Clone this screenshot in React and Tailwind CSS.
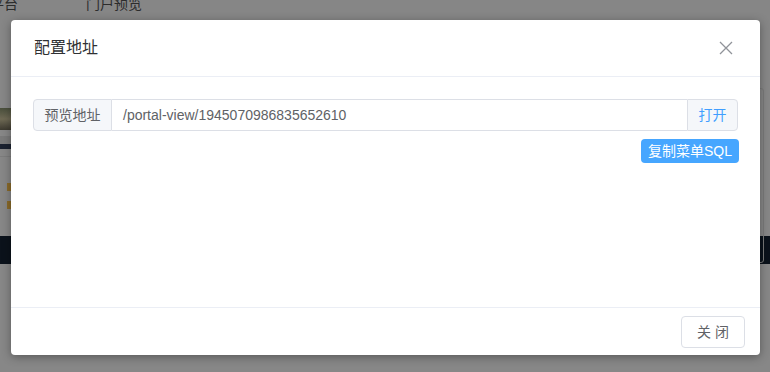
import React from "react";

export default function App() {
  const cjk = { fontFamily: '"Liberation Sans", "Noto Sans CJK SC", sans-serif' };
  return (
    <div className="relative h-[372px] w-[770px] overflow-hidden bg-[#878787]" style={cjk}>
      {/* underlying page (dimmed by the overlay) */}
      <div className="flex h-[30px] items-start gap-[68px] bg-[#868686] text-[14px] leading-[8px] text-[#2c2c2c]">
        <span className="-ml-[10px]">平台</span>
        <span>门户预览</span>
      </div>
      <div className="flex flex-col">
        <div className="mt-[78px] h-[22px] w-[12px] bg-gradient-to-b from-[#4a4f3c] via-[#6f6a55] to-[#3d3a30]" />
        <div className="mt-[6px] h-[8px] w-[12px] bg-[#7a7a7a]" />
        <div className="h-[5px] w-[12px] bg-[#1b2230]" />
        <div className="mt-[7px] h-px w-[12px] bg-[#7c7c7c]" />
        <div className="ml-[7px] mt-[26px] h-[8px] w-[5px] bg-[#8a6a2a]" />
        <div className="ml-[7px] mt-[10px] h-[8px] w-[5px] bg-[#8a6a2a]" />
        <div className="mt-[27px] h-[28px] w-[770px] bg-[#0b121b]" />
      </div>
      <div className="absolute left-[752px] top-[88px] h-[175px] w-[12px] rounded-[3px] border border-[#7a7a7a]" />

      {/* dialog */}
      <div className="absolute left-[11px] top-[20px] flex h-[335px] w-[749px] flex-col rounded-[4px] bg-white shadow-[0_2px_10px_rgba(0,0,0,0.35)]">
        <div className="flex h-[57px] shrink-0 items-center justify-between border-b border-[#ebeef5] pl-[23px] pr-[27px]">
          <span className="text-[16px] text-[#303133]">配置地址</span>
          <svg width="14" height="14" viewBox="0 0 14 14" className="text-[#909399]">
            <path d="M1 1L13 13M13 1L1 13" stroke="currentColor" strokeWidth="1.3" fill="none" />
          </svg>
        </div>
        <div className="flex h-[230px] shrink-0 flex-col px-[22px] pt-[22px]">
          <div className="flex h-[32px] w-[705px] text-[14px]">
            <div className="flex w-[79px] items-center justify-center rounded-l-[4px] border border-[#dcdfe6] bg-[#f5f7fa] text-[#606266]">
              预览地址
            </div>
            <div className="flex flex-1 items-center border-y border-[#dcdfe6] pl-[11px] text-[#606266]">
              /portal-view/1945070986835652610
            </div>
            <div className="flex w-[51px] items-center justify-center rounded-r-[4px] border border-[#dcdfe6] bg-[#f5f7fa] text-[#409eff]">
              打开
            </div>
          </div>
          <div className="mt-[8px] flex w-[706px] justify-end">
            <div className="flex h-[24px] items-center rounded-[4px] bg-[#46a6ff] px-[7px] text-[14px] text-white">
              复制菜单SQL
            </div>
          </div>
        </div>
        <div className="flex flex-1 items-start justify-end border-t border-[#ebeef5] pr-[15px] pt-[8px]">
          <div className="flex h-[32px] w-[64px] items-center justify-center rounded-[4px] border border-[#dcdfe6] text-[14px] tracking-[4px] text-[#606266]">
            <span className="ml-[4px]">关闭</span>
          </div>
        </div>
      </div>
    </div>
  );
}
